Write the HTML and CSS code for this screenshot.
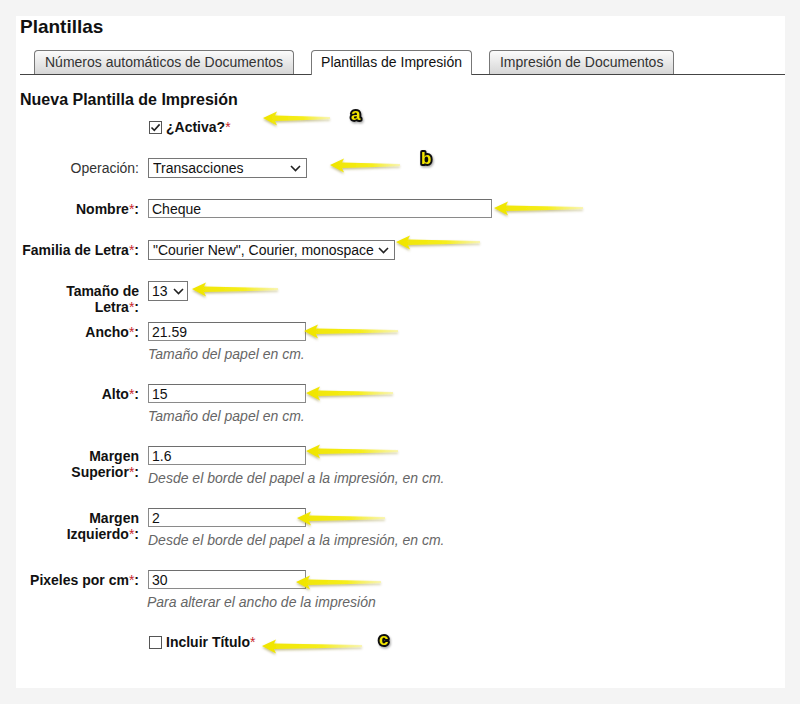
FILE: index.html
```html
<!DOCTYPE html>
<html>
    <head>
        <meta charset="utf-8">
        <title>Plantillas</title>
        <link rel="stylesheet" href="styles.css">
    </head>
    <body>
        <div class="panel">
            <h1 class="title">Plantillas</h1>
            <div class="tabs">
                <a class="tab" href="javascript:;">Números automáticos de Documentos</a>
                <a class="tab active" href="javascript:;">Plantillas de Impresión</a>
                <a class="tab" href="javascript:;">Impresión de Documentos</a>
            </div>
            <h2 class="subtitle">Nueva Plantilla de Impresión</h2>

            <form class="form">
                <div class="row">
                    <span class="label"></span>
                    <label class="check">
                        <span class="box"><svg width="11" height="11" viewBox="0 0 11 11"><path d="M1.5 5.5 L4.3 8.3 L9.6 2.4" fill="none" stroke="#222" stroke-width="1.6"/></svg></span>
                        <b>¿Activa?</b><span class="req">*</span>
                    </label>
                </div>
                <div class="row">
                    <label class="label plain">Operación:</label>
                    <div class="field">
                        <span class="selwrap">
                            <select class="sel w-op"><option>Transacciones</option></select>
                            <svg class="chev" width="11" height="7" viewBox="0 0 11 7"><path d="M1 1 L5.5 5.5 L10 1" fill="none" stroke="#222" stroke-width="1.6"/></svg>
                        </span>
                    </div>
                </div>
                <div class="row">
                    <label class="label">Nombre<span class="req">*</span>:</label>
                    <div class="field"><input class="txt w-long" value="Cheque"></div>
                </div>
                <div class="row">
                    <label class="label">Familia de Letra<span class="req">*</span>:</label>
                    <div class="field">
                        <span class="selwrap">
                            <select class="sel w-font"><option>"Courier New", Courier, monospace</option></select>
                            <svg class="chev" width="11" height="7" viewBox="0 0 11 7"><path d="M1 1 L5.5 5.5 L10 1" fill="none" stroke="#222" stroke-width="1.6"/></svg>
                        </span>
                    </div>
                </div>
                <div class="row">
                    <label class="label">Tamaño de Letra<span class="req">*</span>:</label>
                    <div class="field">
                        <span class="selwrap">
                            <select class="sel w-size"><option>13</option></select>
                            <svg class="chev" width="11" height="7" viewBox="0 0 11 7"><path d="M1 1 L5.5 5.5 L10 1" fill="none" stroke="#222" stroke-width="1.6"/></svg>
                        </span>
                    </div>
                </div>
                <div class="row hinted">
                    <label class="label">Ancho<span class="req">*</span>:</label>
                    <div class="field">
                        <input class="txt" value="21.59">
                        <div class="hint">Tamaño del papel en cm.</div>
                    </div>
                </div>
                <div class="row hinted">
                    <label class="label">Alto<span class="req">*</span>:</label>
                    <div class="field">
                        <input class="txt" value="15">
                        <div class="hint">Tamaño del papel en cm.</div>
                    </div>
                </div>
                <div class="row hinted">
                    <label class="label">Margen Superior<span class="req">*</span>:</label>
                    <div class="field">
                        <input class="txt" value="1.6">
                        <div class="hint">Desde el borde del papel a la impresión, en cm.</div>
                    </div>
                </div>
                <div class="row hinted">
                    <label class="label">Margen Izquierdo<span class="req">*</span>:</label>
                    <div class="field">
                        <input class="txt" value="2">
                        <div class="hint">Desde el borde del papel a la impresión, en cm.</div>
                    </div>
                </div>
                <div class="row hinted">
                    <label class="label">Pixeles por cm<span class="req">*</span>:</label>
                    <div class="field">
                        <input class="txt" value="30">
                        <div class="hint hint-left">Para alterar el ancho de la impresión</div>
                    </div>
                </div>
                <div class="row">
                    <span class="label"></span>
                    <label class="check">
                        <span class="box"></span>
                        <b>Incluir Título</b><span class="req">*</span>
                    </label>
                </div>
            </form>

            <!-- flechas y letras de anotacion -->
            <svg class="marks" width="769" height="672">
                <defs>
                    <linearGradient id="amarillo" x1="0" y1="0" x2="1" y2="0">
                        <stop offset="0" stop-color="#efe400"/>
                        <stop offset="0.6" stop-color="#f6ee1c"/>
                        <stop offset="1" stop-color="#faf59a" stop-opacity="0.7"/>
                    </linearGradient>
                    <filter id="sombra" x="-10%" y="-60%" width="120%" height="220%">
                        <feDropShadow dx="0" dy="1.5" stdDeviation="1" flood-color="#7a7000" flood-opacity="0.45"/>
                    </filter>
                    <filter id="sombra-letra" x="-30%" y="-30%" width="160%" height="160%">
                        <feDropShadow dx="1" dy="1.5" stdDeviation="1" flood-color="#000" flood-opacity="0.35"/>
                    </filter>
                </defs>
                <g fill="url(#amarillo)" filter="url(#sombra)">
                    <path d="M247,102 L261,95.5 L259,99.5 L314,101 L314,103.2 L259,105 L261,109.5 Z"/>
                    <path d="M314,149 L328,142.5 L326,146.5 L384,148 L384,150.2 L326,152 L328,156.5 Z"/>
                    <path d="M478,192 L492,185.5 L490,189.5 L567,191 L567,193.2 L490,195 L492,199.5 Z"/>
                    <path d="M380,226 L394,219.5 L392,223.5 L464,225 L464,227.2 L392,229 L394,233.5 Z"/>
                    <path d="M176,273 L190,266.5 L188,270.5 L262,272 L262,274.2 L188,276 L190,280.5 Z"/>
                    <path d="M288,315 L302,308.5 L300,312.5 L382,314 L382,316.2 L300,318 L302,322.5 Z"/>
                    <path d="M290,377 L304,370.5 L302,374.5 L377,376 L377,378.2 L302,380 L304,384.5 Z"/>
                    <path d="M290,435 L304,428.5 L302,432.5 L382,434 L382,436.2 L302,438 L304,442.5 Z"/>
                    <path d="M281,502 L295,495.5 L293,499.5 L369,501 L369,503.2 L293,505 L295,509.5 Z"/>
                    <path d="M280,566 L294,559.5 L292,563.5 L365,565 L365,567.2 L292,569 L294,573.5 Z"/>
                    <path d="M246,630 L260,623.5 L258,627.5 L346,629 L346,631.2 L258,633 L260,637.5 Z"/>
                </g>
                <g class="letras" filter="url(#sombra-letra)">
                    <text x="335" y="104">a</text>
                    <text x="405" y="148">b</text>
                    <text x="363" y="629">c</text>
                </g>
            </svg>
        </div>
    </body>
</html>
```

FILE: styles.css
```css
*{
    margin:0px;
    padding:0px;
    box-sizing:border-box;
}
body{
    background:#f4f4f4;
    padding:16px;
    font-family:"Liberation Sans", Arial, sans-serif;
    font-size:14px;
    color:#111;
}
.panel{
    position:relative;      /*las flechas se colocan sobre el panel*/
    width:769px;
    height:672px;
    background:#fff;
    padding-left:4px;
}
.title{
    font-size:19px;
    line-height:21px;
    font-weight:bold;
}

/* pestañas */
.tabs{
    display:flex;
    gap:17px;
    margin-top:13px;
    padding-left:14px;
    border-bottom:1px solid #444;
}
.tab{
    display:block;
    height:24px;
    line-height:23px;
    padding:0 10px;
    border:1px solid #777;
    border-bottom:none;
    border-radius:4px 4px 0 0;
    background:linear-gradient(#fbfbfb, #d6d6d6);
    color:#333;
    text-decoration:none;
    font-size:14px;
}
.tab.active{
    height:25px;
    margin-bottom:-1px;
    padding:0 9px;
    background:#fff;
    color:#111;
}

.subtitle{
    margin-top:15px;
    font-size:16px;
    line-height:19px;
    font-weight:bold;
}

/* formulario */
.form{
    margin-top:8px;
}
.row{
    display:flex;
    align-items:flex-start;
    min-height:41px;
}
.row.hinted{
    padding-bottom:22px;
}
.label{
    flex:0 0 119px;
    width:119px;
    margin-right:9px;
    padding-top:2px;
    text-align:right;
    font-weight:bold;
    line-height:16px;
}
.label.plain{
    font-weight:normal;
    color:#333;
}
.req{
    color:#c8262c;
    font-weight:normal;
}
.field{
    display:flex;
    flex-direction:column;
    align-items:flex-start;
}
.txt{
    width:158px;
    height:19px;
    padding:0 3px;
    border:1px solid #8a8a8a;
    border-top-color:#6e6e6e;
    font-family:"Liberation Sans", Arial, sans-serif;
    font-size:14px;
    color:#111;
    background:#fff;
}
.txt.w-long{
    width:344px;
}

/* select con flecha propia */
.selwrap{
    position:relative;
    display:block;
}
.sel{
    display:block;
    height:20px;
    padding:0 18px 0 4px;
    border:1px solid #767676;
    border-radius:0;
    background:#fff;
    appearance:none;
    -webkit-appearance:none;
    font-family:"Liberation Sans", Arial, sans-serif;
    font-size:14px;
    color:#111;
}
.chev{
    position:absolute;
    right:6px;
    top:7px;
    pointer-events:none;
}
.w-op{ width:159px; }
.w-font{ width:247px; }
.w-size{ width:40px; padding-left:3px; }
.w-size + .chev{ right:4px; }

.hint{
    margin-top:6px;
    font-style:italic;
    color:#666;
    line-height:15px;
}
.hint-left{
    margin-left:-1px;
}
.check{
    display:flex;
    align-items:center;
    height:20px;
    margin-left:1px;
}
.check b{
    margin-left:4px;
}
.box{
    display:flex;
    align-items:center;
    justify-content:center;
    width:13px;
    height:13px;
    border:1px solid #555;
    background:#fff;
}

/* anotaciones */
.marks{
    position:absolute;
    left:0;
    top:0;
    pointer-events:none;
}
.letras text{
    font-family:"Liberation Sans", Arial, sans-serif;
    font-size:17px;
    font-weight:bold;
    fill:#f3e600;
    stroke:#111;
    stroke-width:4px;
    stroke-linejoin:round;
    paint-order:stroke;
}
```
